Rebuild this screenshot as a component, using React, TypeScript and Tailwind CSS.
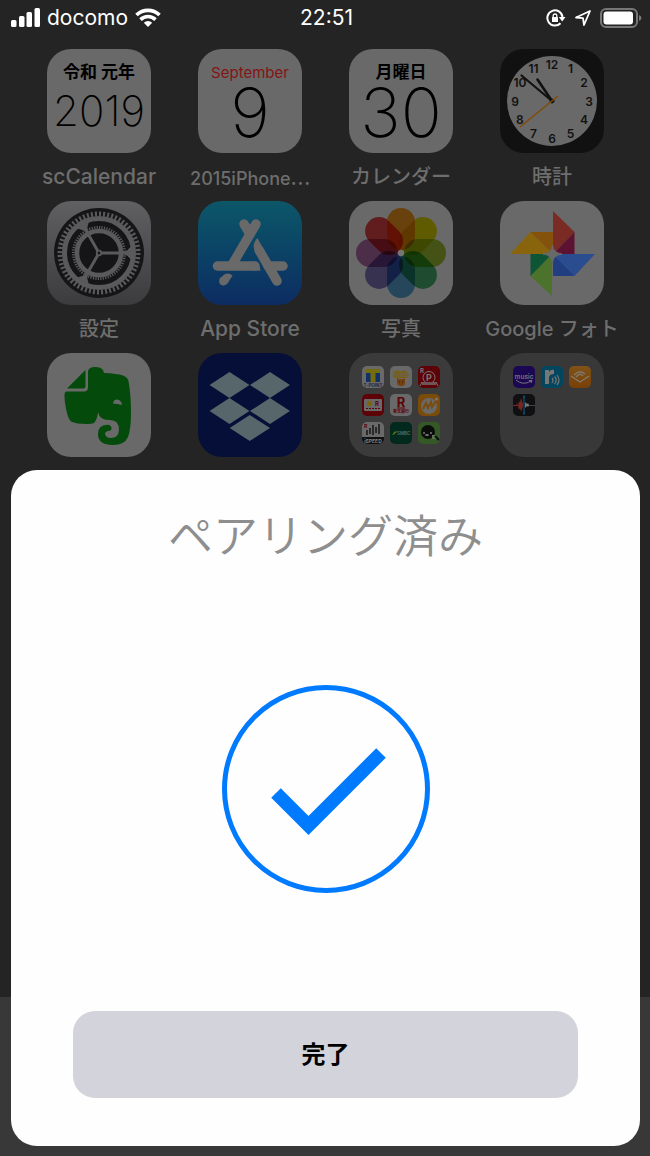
import React from 'react';

interface HomeApp {
  label: React.ReactNode;
  tile: string;
  icon: React.ReactNode;
}

const PETALS = ['#ff9d1e', '#e6dc00', '#a5c832', '#4bb873', '#5aaadc', '#8278c3', '#b96eaf', '#eb4646'];
const HOURS = [12, 1, 2, 3, 4, 5, 6, 7, 8, 9, 10, 11];

const CalendarFace: React.FC<{ top: string; day: string; topClass: string; dayClass: string }> = ({ top, day, topClass, dayClass }) => (
  <div className="flex flex-col items-center whitespace-nowrap text-black">
    <span className={topClass}>{top}</span>
    <span className={dayClass}>{day}</span>
  </div>
);

const ClockIcon = () => (
  <svg viewBox="0 0 104 104" className="size-full">
    <circle cx="52" cy="52" r="45" fill="#696969" />
    {HOURS.map((h, i) => {
      const a = (i * Math.PI) / 6;
      return (
        <text key={h} x={52 + 37 * Math.sin(a)} y={56.5 - 37 * Math.cos(a)} textAnchor="middle" fontSize="12" fontWeight="600" fill="#111">
          {h}
        </text>
      );
    })}
    <g strokeLinecap="round" stroke="#111">
      <path d="M52 52L21.500 26.500" strokeWidth="2.200" />
      <path d="M52 52L37.500 30.500" strokeWidth="2.600" />
      <circle cx="52" cy="52" r="2" fill="#111" />
      <path d="M57.500 47.500L20.500 77.500" stroke="#834a08" strokeWidth="1.600" />
    </g>
  </svg>
);

const SettingsIcon = () => (
  <svg viewBox="0 0 104 104" className="size-full" fill="none" stroke="#5a5a5c">
    <circle cx="52" cy="52" r="45" fill="#151517" stroke="none" />
    <circle cx="52" cy="52" r="34.500" strokeWidth="5" />
    <circle cx="52" cy="52" r="39" strokeWidth="5" pathLength="120" strokeDasharray="1 1" />
    <circle cx="52" cy="52" r="22" strokeWidth="4.500" />
    <circle cx="52" cy="52" r="25.500" strokeWidth="3" pathLength="128" strokeDasharray="1 1" />
    {[0, 120, 240].map(r => (
      <g key={r} transform={`rotate(${r} 52 52)`}>
        <path d="M54 52H84" strokeWidth="3" />
        <path d="M76 52Q81 50 84 46V58Q81 54 76 52Z" fill="#5a5a5c" strokeWidth="1" />
      </g>
    ))}
    <circle cx="52" cy="52" r="2.300" fill="#151517" strokeWidth="1.800" />
  </svg>
);

const AppStoreIcon = () => (
  <svg viewBox="0 0 104 104" className="size-full" fill="none" stroke="#696969" strokeWidth="9.500" strokeLinecap="round">
    <path d="M58 23L34 64" />
    <path d="M46 23L52 33" />
    <path d="M19.500 65H57" />
    <path d="M70 65H85" />
    <path d="M61 49L79 80" />
    <path d="M55.500 45Q56 40 59.500 37L66 49L60 53Q55.500 49 55.500 45Z" fill="#696969" stroke="none" />
    <path d="M56 60.300Q62 62 62.500 69.700H56Z" fill="#696969" stroke="none" />
    <path d="M27 73Q31 71.500 34.500 74.500L29.500 82.500Q26 86 22.500 83.500Q20 81 22 77Z" fill="#696969" stroke="none" />
  </svg>
);

const PhotosIcon = () => (
  <svg viewBox="0 0 104 104" className="isolate size-full rounded-[24px] bg-[#696969]">
    {PETALS.map((color, i) => (
      <rect key={color} x="38" y="7" width="28" height="42" rx="14" fill={color} transform={`rotate(${i * 45} 52 52)`} className="mix-blend-multiply" />
    ))}
    <circle cx="52" cy="52" r="3" fill="#767676" />
  </svg>
);

const GooglePhotosIcon = () => (
  <svg viewBox="0 0 104 104" className="size-full">
    <path d="M53 10L74.500 31L53 53Z" fill="#7a2c24" />
    <path d="M74.500 31V53H53Z" fill="#5c1230" />
    <path d="M53 53H95L74.500 75Z" fill="#294d8f" />
    <path d="M53 53L74.500 75H53Z" fill="#213e80" />
    <path d="M52 53V95L30.500 75Z" fill="#4c732b" />
    <path d="M30.500 53H52L30.500 75Z" fill="#0d5535" />
    <path d="M10 53L30.500 31L53 53Z" fill="#88650d" />
    <path d="M30.500 31H53V53Z" fill="#85520c" />
    <path d="M52.500 44Q53 52 62 53Q53 54 52.500 62Q52 54 43 53Q52 52 52.500 44Z" fill="#696969" stroke="#696969" />
  </svg>
);

const EvernoteIcon = () => (
  <svg viewBox="0 0 104 104" className="size-full" fill="#034a0b">
    <path d="M20 35.500L38.500 17V33Q38.500 35.500 36 35.500Z" />
    <path d="M20 38.500H37Q41 38.500 41 34V18Q42 14 48 14Q54 14 56 17L57 20Q70 20.500 76 22.500Q80.500 24 81.500 28Q84 42 84 60Q84 76 81 84Q77.500 92 66 92Q51 92 51 81Q51 72 60 71.800Q65 72 64.500 76Q64 78 61 78Q58 78.500 58 81Q59 85 64 85Q71.500 85 72 77Q72 67 63 67Q54 67 52 62L51 59Q50.500 66 47 70Q45 71 40 71Q29 71 24 68.500Q20.500 66 18 50Q17 41 18 39.500Q18.500 38.500 20 38.500Z" />
    <path d="M66 50.500Q66.500 46.500 70 46.500Q74.500 47 75 52Q70 50.500 66 50.500Z" fill="#696969" />
  </svg>
);

const DropboxIcon = () => (
  <svg viewBox="0 0 104 104" className="size-full" fill="#56666a">
    {['M31.500 19L51.500 32L31.500 45L11.500 32Z', 'M72 19L92 32L72 45L52 32Z', 'M31.500 45L51.500 58L31.500 71L11.500 58Z', 'M72 45L92 58L72 71L52 58Z', 'M51.700 62L72 75L51.700 88L31.700 75Z'].map(d => (
      <path key={d} d={d} />
    ))}
  </svg>
);

const Mini: React.FC<{ className: string; children: React.ReactNode }> = ({ className, children }) => (
  <svg viewBox="0 0 22 22" className={`size-[22px] rounded-[5px] ${className}`}>
    {children}
  </svg>
);

const MoneyFolder = () => (
  <div className="grid size-full grid-cols-3 content-start gap-[6px] p-[13px]">
    <Mini className="bg-[#696969]">
      <path d="M4 3H18V16H4Z" fill="#12306a" />
      <path d="M4 3H18V7H13.500V16H8.500V7H4Z" fill="#746d0b" />
      <text x="11" y="21" textAnchor="middle" fontSize="4.500" fontWeight="700" fill="#1b2a4a">T-POINT</text>
    </Mini>
    <Mini className="bg-[#696969]">
      <path d="M3 9A4 4 0 0 1 10 6Q14 3 17 6A3.500 3.500 0 0 1 17 12H6Q3 12 3 9Z" fill="#79600f" />
      <text x="11" y="11" textAnchor="middle" fontSize="6" fontWeight="700" fill="#6b6450">Ponta</text>
      <path d="M7 12L9 13H13L15 12V17Q15 20 11 20Q7 20 7 17Z" fill="#75400d" />
      <path d="M9 16H10M12 16H13" stroke="#1c1c1c" />
    </Mini>
    <Mini className="bg-[#5d0308]">
      <circle cx="11" cy="11.500" r="6" fill="none" stroke="#777" />
      <text x="11" y="15" textAnchor="middle" fontSize="9" fontWeight="700" fill="#777">P</text>
      <text x="2" y="7" fontSize="6" fontWeight="700" fill="#777">R</text>
      <path d="M4 16H18V19H4Z" fill="#6f5558" />
      <path d="M4 16L2 20M18 16L20 20" stroke="#777" />
    </Mini>
    <Mini className="bg-[#5d0308]">
      <rect x="2" y="5" width="18" height="12" rx="1" fill="#696969" />
      <path d="M5 7H10V12H5Z" fill="#7b650d" />
      <text x="13" y="12" fontSize="6" fontWeight="700" fill="#5d0308">R</text>
      <path d="M4 14.500H18" stroke="#5d0308" strokeDasharray="2 1" />
    </Mini>
    <Mini className="bg-[#696969]">
      <text x="11" y="13" textAnchor="middle" fontSize="13" fontWeight="700" fill="#5d0308">R</text>
      <path d="M7 14H15" stroke="#5d0308" />
      <text x="11" y="19" textAnchor="middle" fontSize="4" fontWeight="700" fill="#5d0308">楽天銀行</text>
    </Mini>
    <Mini className="bg-[#7b4b09]">
      <circle cx="11" cy="12" r="8" fill="#696969" />
      <path d="M5 15L8 9L10 14L13 8L14 13L18 7" fill="none" stroke="#7b4b09" strokeWidth="2" />
      <circle cx="18.500" cy="5" r="1.500" fill="#777" />
    </Mini>
    <Mini className="bg-[#696969]">
      <path d="M5 8V13M8 6V12M11 3V13M14 5V11M17 2V12" stroke="#161616" strokeWidth="1.500" />
      <text x="2" y="6" fontSize="5" fontWeight="700" fill="#5d0308">R</text>
      <path d="M0 15H22V22H0Z" fill="#101010" />
      <text x="11" y="20.500" textAnchor="middle" fontSize="5" fontWeight="700" fill="#808080">iSPEED</text>
    </Mini>
    <Mini className="bg-[#02291d]">
      <path d="M2 13L5 9V12ZM4 11L7 8L6 11Z" fill="#5c7517" />
      <text x="7" y="13" fontSize="4.500" fontWeight="600" fill="#56706a">SMBC</text>
    </Mini>
    <Mini className="bg-[#345826]">
      <circle cx="10" cy="10" r="7" fill="#0b0d0b" />
      <circle cx="6" cy="11" r="1" fill="#777" />
      <circle cx="13" cy="11" r="1" fill="#777" />
      <ellipse cx="9" cy="13" rx="2" ry="1" fill="#777" />
      <path d="M14 13H18V17H14Z" fill="#5c705a" />
      <path d="M17 14L21 18" stroke="#0b0d0b" strokeWidth="2" />
    </Mini>
  </div>
);

const MediaFolder = () => (
  <div className="grid size-full grid-cols-3 content-start gap-[6px] p-[13px]">
    <Mini className="bg-[#1c0753]">
      <text x="11" y="12.500" textAnchor="middle" fontSize="6.500" fontWeight="600" fill="#777">music</text>
      <path d="M3 14Q10 20 18 15M16 14.500L19 14.500L18 17" fill="none" stroke="#777" />
    </Mini>
    <Mini className="bg-[#03475f]">
      <path d="M4 4H8V6Q10 3 13 4V8Q8 8 8 12V18H4Z" fill="#777" />
      <path d="M11 12Q13 14 11 17M13.500 10.500Q17 14 13.500 18M16 9Q20 14 16 19" fill="none" stroke="#777" strokeWidth="1.200" />
    </Mini>
    <Mini className="bg-linear-to-b from-[#805217] to-[#784006]">
      <path d="M2 10L11 16L20 10M5 9Q11 3 16 8M7 11Q11 6 14 10" fill="none" stroke="#807a70" strokeWidth="1.400" />
    </Mini>
    <Mini className="bg-[#101012]">
      <path d="M0 11H3L4 9L5 12L6 7L7 9L8 4L10 10V12L8 18L7 14L6 16L5 12L3 12H0Z" fill="#762724" />
      <path d="M12 8L14 10L15 9L16 11H22V11.500H16L15 13L14 12L12 14Z" fill="#777" />
      <path d="M11 2V20" stroke="#0b597b" strokeWidth="1.200" />
      <circle cx="11" cy="2.500" r="1" fill="#0b597b" />
      <circle cx="11" cy="19.500" r="1" fill="#0b597b" />
    </Mini>
  </div>
);

const bigDay = 'text-[68px] font-[250] leading-[62px]';

const APPS: HomeApp[] = [
  { label: <span className="text-[21px]">scCalendar</span>, tile: 'bg-[#696969]', icon: <CalendarFace top="令和 元年" day="2019" topClass="h-[42px] pt-1 text-[17px] font-bold leading-[38px]" dayClass="text-[42px] font-[250] leading-10" /> },
  { label: <span className="text-lg leading-8">2015iPhone<span className="font-['Noto_Sans_CJK_JP',sans-serif]">…</span></span>, tile: 'bg-[#696969]', icon: <CalendarFace top="September" day="9" topClass="h-8 text-[15px] leading-[48px] text-[#851414]" dayClass={bigDay} /> },
  { label: 'カレンダー', tile: 'bg-[#696969]', icon: <CalendarFace top="月曜日" day="30" topClass="h-8 pt-1 text-[17px] font-bold leading-[38px]" dayClass={bigDay} /> },
  { label: '時計', tile: 'bg-[#111111]', icon: <ClockIcon /> },
  { label: '設定', tile: 'bg-linear-to-b from-[#606063] to-[#3c3c3f]', icon: <SettingsIcon /> },
  { label: <span className="text-[21px]">App Store</span>, tile: 'bg-linear-to-b from-[#0c5768] to-[#0d2c62]', icon: <AppStoreIcon /> },
  { label: '写真', tile: 'bg-[#696969]', icon: <PhotosIcon /> },
  { label: 'Google フォト', tile: 'bg-[#696969]', icon: <GooglePhotosIcon /> },
  { label: '', tile: 'bg-[#696969]', icon: <EvernoteIcon /> },
  { label: '', tile: 'bg-[#050f38]', icon: <DropboxIcon /> },
  { label: '', tile: 'bg-[#3b3b3b]', icon: <MoneyFolder /> },
  { label: '', tile: 'bg-[#383838]', icon: <MediaFolder /> },
];

const StatusBar = () => (
  <header className="flex h-[35px] items-center pl-[11px] pr-2 text-[21px] leading-none text-white">
    <div className="flex flex-1 items-center gap-[7px]">
      <svg viewBox="0 0 29 19" className="h-[19px] w-[29px]" fill="#fff">
        <rect x="0" y="12" width="5.500" height="7" rx="1.500" />
        <rect x="8" y="8" width="5.500" height="11" rx="1.500" />
        <rect x="15.500" y="4" width="5.500" height="15" rx="1.500" />
        <rect x="23.500" y="0" width="5.500" height="19" rx="1.500" />
      </svg>
      <span>docomo</span>
      <svg viewBox="0 0 26 19" className="h-[19px] w-[26px]" fill="none" stroke="#fff" strokeWidth="3.600">
        <path d="M1.500 7A16.500 16.500 0 0 1 24.500 7" />
        <path d="M5.500 11.600A10.700 10.700 0 0 1 20.500 11.600" />
        <path d="M13 19L8.800 14.800A6 6 0 0 1 17.200 14.800Z" fill="#fff" stroke="none" />
      </svg>
    </div>
    <time>22:51</time>
    <div className="flex flex-1 items-center justify-end gap-2">
      <svg viewBox="0 0 20 18" className="h-[18px] w-5" fill="none" stroke="#fff" strokeWidth="2">
        <path d="M14.500 14.200A7.600 7.600 0 1 1 16.500 8" />
        <path d="M12.800 8H19.500L16.200 12.500Z" fill="#fff" stroke="none" />
        <rect x="6" y="8" width="6" height="5" rx="0.500" fill="#fff" stroke="none" />
        <path d="M7.200 8.500V6.500Q7.200 5 9 5T10.800 6.500V8.500" strokeWidth="1.300" />
      </svg>
      <svg viewBox="0 0 18 18" className="size-[18px]" fill="none" stroke="#fff" strokeWidth="1.800" strokeLinejoin="round">
        <path d="M16 2L2 8.500L9 9.200L10 16Z" />
      </svg>
      <svg viewBox="0 0 42 20" className="h-5 w-[42px]">
        <rect x="1" y="1" width="36" height="18" rx="5" fill="none" stroke="#777" strokeWidth="2" />
        <rect x="3.500" y="3.500" width="29.500" height="13" rx="3" fill="#fff" />
        <path d="M39 7Q41.500 8 41.500 10T39 13Z" fill="#777" />
      </svg>
    </div>
  </header>
);

const HomeScreen = () => (
  <ul className="grid grid-cols-[repeat(4,104px)] justify-between gap-y-2 pl-[47px] pr-[46px] pt-[14px]">
    {APPS.map((app, i) => (
      <li key={i} className="flex flex-col items-center gap-2">
        <div className={`size-[104px] shrink-0 overflow-hidden rounded-[24px] ${app.tile}`}>{app.icon}</div>
        <div className="h-8 whitespace-nowrap text-xl font-medium leading-8 text-[#6e6e6e]">{app.label}</div>
      </li>
    ))}
  </ul>
);

const PairingSheet = () => (
  <section
    role="dialog"
    aria-labelledby="pairing-title"
    className="absolute bottom-[10px] left-[11px] right-[10px] flex flex-col items-center rounded-[26px] bg-[#fefefe] px-[62px] pb-12 pt-[35px]"
  >
    <h1 id="pairing-title" className="whitespace-nowrap text-[45px] font-[350] leading-[64px] text-[#8e8e8e]">ペアリング済み</h1>
    <svg viewBox="0 0 208 208" className="mt-[116px] size-[208px]" fill="none" stroke="#007aff">
      <circle cx="104" cy="104" r="101.500" strokeWidth="5" />
      <path d="M54 108L86.500 140.500L159 68" strokeWidth="13.500" />
    </svg>
    <button type="button" className="mt-[118px] h-[87px] w-full rounded-[22px] bg-[#d3d3db] text-2xl font-bold text-black">
      完了
    </button>
  </section>
);

export default function App() {
  return (
    <main className="relative flex min-h-screen flex-col bg-[#242424] font-['Inter','Noto_Sans_CJK_JP',sans-serif]">
      <StatusBar />
      <HomeScreen />
      <div className="mt-auto h-[159px] bg-[#383838]" />
      <PairingSheet />
    </main>
  );
}
